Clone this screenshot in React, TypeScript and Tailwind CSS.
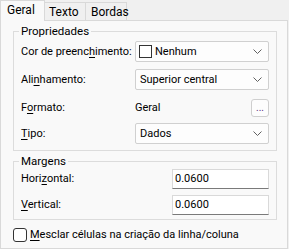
const font = { fontFamily: 'Roboto, "Noto Sans", sans-serif' };

function Chevron() {
  return (
    <svg width="9" height="5" viewBox="0 0 9 5" className="shrink-0">
      <path d="M0.5 0.5 L4.5 4.5 L8.5 0.5" fill="none" stroke="#606060" strokeWidth="1" />
    </svg>
  );
}

function Combo({ children }: { children: React.ReactNode }) {
  return (
    <div className="flex items-center justify-between w-[134px] h-[21px] border border-[#d0d0d0] rounded-[2px] bg-[#fdfdfd] pl-[3px] pr-[6px]">
      <div className="flex items-center gap-[3px]">{children}</div>
      <Chevron />
    </div>
  );
}

function Label({ pre, key_, post }: { pre: string; key_: string; post: string }) {
  return (
    <span className="whitespace-nowrap">
      {pre}
      <span className="underline underline-offset-[2px]">{key_}</span>
      {post}
    </span>
  );
}

function TextBox({ value }: { value: string }) {
  return (
    <div className="w-[97px] h-[20px] bg-white border border-[#d9d9d9] border-b-[#7a7a7a] flex items-center pl-[2px]">
      {value}
    </div>
  );
}

export default function App() {
  return (
    <div className="w-[289px] h-[249px] bg-[#f0f0f0] text-black text-[11px] leading-[14px]" style={font}>
      {/* Tabs */}
      <div className="flex items-end h-[20px] text-[12px]">
        <div className="relative z-10 -mb-px w-[45px] h-[21px] border border-b-0 border-[#d9d9d9] bg-[#f9f9f9] pl-[6px] pt-[2px]">
          Geral
        </div>
        <div className="w-[41px] h-[18px] border-t border-r border-[#d9d9d9] pl-[4px] pt-[2px]">
          Texto
        </div>
        <div className="w-[41px] h-[18px] border-t border-r border-[#d9d9d9] pl-[5px] pt-[2px]">
          Bordas
        </div>
      </div>

      {/* Panel */}
      <div className="w-[288px] h-[229px] border border-[#d9d9d9] bg-[#f9f9f9] pt-[3px]">
        <fieldset className="ml-[12px] w-[264px] border border-[#dcdcdc] p-0 pb-[6px]">
          <legend className="ml-[5px] px-[2px] text-[11.5px]">Propriedades</legend>
          <div className="flex flex-col pl-[7px] pt-[3px]">
            <div className="flex items-center h-[21px]">
              <div className="w-[114px]">
                <Label pre="Cor de preenc" key_="h" post="imento:" />
              </div>
              <Combo>
                <span className="w-[13px] h-[13px] border border-[#333] bg-white" />
                <span>Nenhum</span>
              </Combo>
            </div>
            <div className="flex items-center h-[21px] mt-[7px]">
              <div className="w-[114px]">
                <Label pre="Ali" key_="n" post="hamento:" />
              </div>
              <Combo>
                <span className="pl-px">Superior central</span>
              </Combo>
            </div>
            <div className="flex items-center h-[21px] mt-[7px]">
              <div className="w-[114px]">
                <Label pre="F" key_="o" post="rmato:" />
              </div>
              <div className="flex items-center justify-between w-[134px]">
                <span>Geral</span>
                <div className="w-[18px] h-[18px] border border-[#cfcfcf] rounded-[3px] bg-[#fdfdfd] flex items-end justify-center text-[10px] text-[#5a2a80] leading-none pb-[3px]">
                  ...
                </div>
              </div>
            </div>
            <div className="flex items-center h-[21px] mt-[5px]">
              <div className="w-[114px]">
                <Label pre="" key_="T" post="ipo:" />
              </div>
              <Combo>
                <span className="pl-px">Dados</span>
              </Combo>
            </div>
          </div>
        </fieldset>

        <fieldset className="mt-[3px] ml-[12px] w-[264px] border border-[#dcdcdc] p-0 pb-[4px]">
          <legend className="ml-[5px] px-[2px] text-[11.5px]">Margens</legend>
          <div className="flex flex-col pl-[7px] pt-px">
            <div className="flex items-center">
              <div className="w-[151px]">
                <Label pre="Hori" key_="z" post="ontal:" />
              </div>
              <TextBox value="0.0600" />
            </div>
            <div className="flex items-center mt-[6px]">
              <div className="w-[151px]">
                <Label pre="" key_="V" post="ertical:" />
              </div>
              <TextBox value="0.0600" />
            </div>
          </div>
        </fieldset>

        <label className="flex items-center gap-[3px] ml-[12px] mt-[8px]">
          <span className="w-[14px] h-[14px] border border-[#333] rounded-[3px] bg-white" />
          <Label pre="" key_="M" post="esclar células na criação da linha/coluna" />
        </label>
      </div>
    </div>
  );
}
